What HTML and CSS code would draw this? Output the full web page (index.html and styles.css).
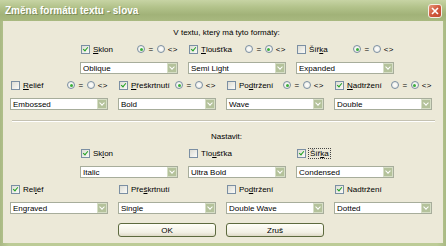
FILE: index.html
```html
<!DOCTYPE html>
<html lang="cs">
<head>
    <meta charset="UTF-8">
    <title>Změna formátu textu - slova</title>
    <link rel="stylesheet" href="styles.css">
</head>
<body>
    <div class="window">
        <div class="titlebar">
            <span class="title">Změna formátu textu - slova</span>
            <span class="close">
                <svg width="8" height="8" viewBox="0 0 8 8"><path d="M1 1L7 7M7 1L1 7" stroke="#fff" stroke-width="1.6"/></svg>
            </span>
        </div>
        <div class="content">
            <p class="caption">V textu, který má tyto formáty:</p>

            <div class="grid shifted">
                <div class="cell">
                    <div class="head">
                        <span class="check on"><span class="box"></span><span><u>S</u>klon</span></span>
                        <span class="radios"><span class="radio on"></span>=<span class="radio"></span>&lt;&gt;</span>
                    </div>
                    <div class="select"><span>Oblique</span><span class="drop"></span></div>
                </div>
                <div class="cell">
                    <div class="head">
                        <span class="check on"><span class="box"></span><span><u>T</u>loušťka</span></span>
                        <span class="radios"><span class="radio"></span>=<span class="radio on"></span>&lt;&gt;</span>
                    </div>
                    <div class="select"><span>Semi Light</span><span class="drop"></span></div>
                </div>
                <div class="cell">
                    <div class="head">
                        <span class="check"><span class="box"></span><span>Šíř<u>k</u>a</span></span>
                        <span class="radios"><span class="radio on"></span>=<span class="radio"></span>&lt;&gt;</span>
                    </div>
                    <div class="select"><span>Expanded</span><span class="drop"></span></div>
                </div>
            </div>

            <div class="grid row-gap">
                <div class="cell">
                    <div class="head">
                        <span class="check"><span class="box"></span><span><u>R</u>eliéf</span></span>
                        <span class="radios"><span class="radio on"></span>=<span class="radio"></span>&lt;&gt;</span>
                    </div>
                    <div class="select"><span>Embossed</span><span class="drop"></span></div>
                </div>
                <div class="cell">
                    <div class="head">
                        <span class="check on"><span class="box"></span><span><u>P</u>řeškrtnutí</span></span>
                        <span class="radios"><span class="radio on"></span>=<span class="radio"></span>&lt;&gt;</span>
                    </div>
                    <div class="select"><span>Bold</span><span class="drop"></span></div>
                </div>
                <div class="cell">
                    <div class="head">
                        <span class="check"><span class="box"></span><span>Po<u>d</u>tržení</span></span>
                        <span class="radios"><span class="radio on"></span>=<span class="radio"></span>&lt;&gt;</span>
                    </div>
                    <div class="select"><span>Wave</span><span class="drop"></span></div>
                </div>
                <div class="cell">
                    <div class="head">
                        <span class="check on"><span class="box"></span><span><u>N</u>adtržení</span></span>
                        <span class="radios"><span class="radio"></span>=<span class="radio on"></span>&lt;&gt;</span>
                    </div>
                    <div class="select"><span>Double</span><span class="drop"></span></div>
                </div>
            </div>

            <div class="separator"></div>

            <p class="caption">Nastavit:</p>

            <div class="grid shifted">
                <div class="cell">
                    <div class="head">
                        <span class="check on"><span class="box"></span><span>Sk<u>l</u>on</span></span>
                    </div>
                    <div class="select"><span>Italic</span><span class="drop"></span></div>
                </div>
                <div class="cell">
                    <div class="head">
                        <span class="check"><span class="box"></span><span>Tlo<u>u</u>šťka</span></span>
                    </div>
                    <div class="select"><span>Ultra Bold</span><span class="drop"></span></div>
                </div>
                <div class="cell">
                    <div class="head">
                        <span class="check on"><span class="box"></span><span class="focus">Šíř<u>k</u>a</span></span>
                    </div>
                    <div class="select"><span>Condensed</span><span class="drop"></span></div>
                </div>
            </div>

            <div class="grid row-gap">
                <div class="cell">
                    <div class="head">
                        <span class="check on"><span class="box"></span><span>Rel<u>i</u>éf</span></span>
                    </div>
                    <div class="select"><span>Engraved</span><span class="drop"></span></div>
                </div>
                <div class="cell">
                    <div class="head">
                        <span class="check"><span class="box"></span><span>Pře<u>š</u>krtnutí</span></span>
                    </div>
                    <div class="select"><span>Single</span><span class="drop"></span></div>
                </div>
                <div class="cell">
                    <div class="head">
                        <span class="check"><span class="box"></span><span>Po<u>d</u>tržení</span></span>
                    </div>
                    <div class="select"><span>Double Wave</span><span class="drop"></span></div>
                </div>
                <div class="cell">
                    <div class="head">
                        <span class="check on"><span class="box"></span><span>Nadtržení</span></span>
                    </div>
                    <div class="select"><span>Dotted</span><span class="drop"></span></div>
                </div>
            </div>

            <div class="grid buttons">
                <button class="btn ok">OK</button>
                <button class="btn">Zruš</button>
            </div>
        </div>
    </div>
</body>
</html>
```

FILE: styles.css
```css
* {
    box-sizing: border-box;
}
body {
    margin: 0;
    font-family: 'Liberation Sans', Arial, sans-serif;
    font-size: 8px;
    color: #000;
}
.window {
    width: 446px;
    height: 246px;
    display: flex;
    flex-direction: column;
    padding: 0 3px 3px;
    background: linear-gradient(90deg, #a9b983, #bccb96 2%, #bccb96 98%, #a9b983);
}
.titlebar {
    height: 21px;
    margin: 0 -3px;
    padding: 0 4px 0 5px;
    display: flex;
    align-items: center;
    justify-content: space-between;
    background: linear-gradient(#c7d4a4, #b2c28a 35%, #a1b278 70%, #a9b980);
}
.title {
    color: #fff;
    font-weight: bold;
    font-size: 10px;
    text-shadow: 1px 1px 0 #7d8c58;
}
.close {
    width: 14px;
    height: 14px;
    border: 1px solid #f3f0e6;
    border-radius: 3px;
    display: flex;
    align-items: center;
    justify-content: center;
    background: linear-gradient(135deg, #e9987a, #d0573c 50%, #c24a30);
}
.content {
    flex: 1;
    background: #ece9d8;
    padding: 6px 0 0 7px;
}
.caption {
    margin: 0;
    height: 11px;
    line-height: 11px;
    text-align: center;
}
.grid {
    display: grid;
    grid-template-columns: repeat(4, 98px);
    column-gap: 10px;
}
.grid.shifted {
    margin-left: 70px;
    grid-template-columns: repeat(3, 98px);
    margin-top: 5px;
}
.grid.row-gap {
    margin-top: 5px;
}
.cell {
    display: flex;
    flex-direction: column;
    gap: 7px;
}
.head {
    height: 12px;
    display: flex;
    align-items: center;
    justify-content: space-between;
}
.check {
    display: flex;
    align-items: center;
    gap: 3px;
    margin-left: 1px;
}
.box {
    width: 9px;
    height: 9px;
    border: 1px solid #7b8fa3;
    background: linear-gradient(135deg, #dcdcd4, #fbfbf8);
    position: relative;
}
.check.on .box::after {
    content: '';
    position: absolute;
    left: 2px;
    top: 0px;
    width: 2px;
    height: 4px;
    border: solid #21a121;
    border-width: 0 1.5px 1.5px 0;
    transform: rotate(40deg);
}
.focus {
    outline: 1px dotted #444;
    padding: 0 1px;
}
.radios {
    display: flex;
    align-items: center;
    gap: 3px;
    letter-spacing: 0.5px;
}
.radio {
    width: 8px;
    height: 8px;
    border: 1px solid #7b8fa3;
    border-radius: 50%;
    background: radial-gradient(#fff, #e6e6de);
    position: relative;
}
.radio.on::after {
    content: '';
    position: absolute;
    left: 1.5px;
    top: 1.5px;
    width: 3px;
    height: 3px;
    border-radius: 50%;
    background: #3cae3c;
}
.select {
    height: 12px;
    border: 1px solid #a7ad9b;
    background: #fff;
    display: flex;
    align-items: center;
    justify-content: space-between;
    padding-left: 2px;
}
.drop {
    width: 10px;
    height: 10px;
    background: #b4c29b;
    border: 1px solid #d6dec6;
    position: relative;
}
.drop::after {
    content: '';
    position: absolute;
    left: 2px;
    top: 1px;
    width: 3px;
    height: 3px;
    border: solid #fff;
    border-width: 0 1.5px 1.5px 0;
    transform: rotate(45deg);
}
.separator {
    height: 2px;
    margin: 10px 8px 0 2px;
    border-top: 1px solid #c5c2b2;
    border-bottom: 1px solid #fff;
}
.separator + .caption {
    margin-top: 9px;
}
.buttons {
    margin-top: 9px;
}
.btn {
    height: 14px;
    padding: 0;
    font: inherit;
    border: 1px solid #5d6a3e;
    border-radius: 3px;
    background: linear-gradient(#fffff8, #f2f0e4 70%, #dedac6);
}
.btn.ok {
    grid-column: 2;
}
```
